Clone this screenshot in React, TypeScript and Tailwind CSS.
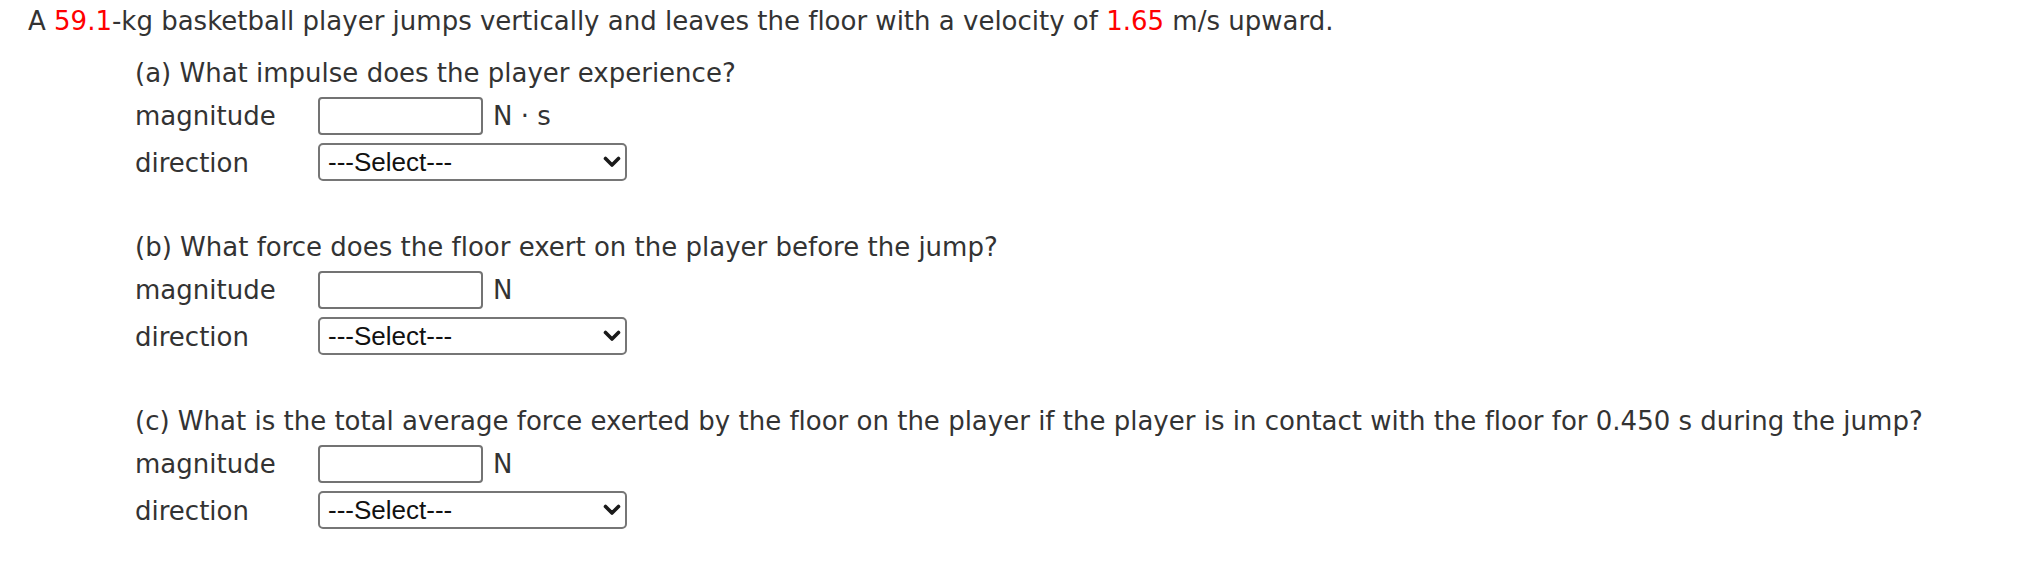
import React from "react";

const rows = [
  { label: "(a) What impulse does the player experience?", unit: "N · s" },
  { label: "(b) What force does the floor exert on the player before the jump?", unit: "N" },
  {
    label:
      "(c) What is the total average force exerted by the floor on the player if the player is in contact with the floor for 0.450 s during the jump?",
    unit: "N",
  },
];

function Chevron() {
  return (
    <svg width="18" height="12" viewBox="0 0 18 12" className="pointer-events-none absolute right-[6px] top-[13px]">
      <path d="M2.5 2.5 L9 9 L15.5 2.5" fill="none" stroke="#1a1a1a" strokeWidth="3.6" strokeLinecap="round" strokeLinejoin="round" />
    </svg>
  );
}

function Part({ label, unit, first }: { label: string; unit: string; first?: boolean }) {
  return (
    <div className={first ? "mt-[22px]" : "mt-[50px]"}>
      <p className="leading-[30px]">{label}</p>
      <div className="mt-[9px] grid grid-cols-[183px_auto] items-center gap-y-[8px]">
        <span className="leading-[30px]">magnitude</span>
        <div className="flex items-center gap-[10px]">
          <input
            type="text"
            className="h-[38px] w-[165px] rounded-[4px] border-2 border-[#737373] bg-white px-2 outline-none"
          />
          <span className="leading-[30px]">{unit}</span>
        </div>
        <span className="leading-[30px]">direction</span>
        <div className="relative w-[309px]">
          <select
            defaultValue=""
            className="h-[38px] w-[309px] appearance-none rounded-[5px] border-2 border-[#767676] bg-white pl-[8px] text-[26px] leading-[30px] text-[#111] outline-none font-['Liberation_Sans',Arial,sans-serif]"
          >
            <option value="">---Select---</option>
            <option value="up">upward</option>
            <option value="down">downward</option>
          </select>
          <Chevron />
        </div>
      </div>
    </div>
  );
}

export default function App() {
  return (
    <main className="min-h-[580px] bg-white pl-[28px] pt-[6px] text-[26px] text-[#333333] [font-variant-ligatures:none] font-['DejaVu_Sans',Verdana,sans-serif]">
      <p className="leading-[30px]">
        A <span className="text-[#ff0000]">59.1</span>-kg basketball player jumps vertically and leaves the floor with a
        velocity of <span className="text-[#ff0000]">1.65</span> m/s upward.
      </p>
      <div className="ml-[107px]">
        {rows.map((r, i) => (
          <Part key={i} label={r.label} unit={r.unit} first={i === 0} />
        ))}
      </div>
    </main>
  );
}
